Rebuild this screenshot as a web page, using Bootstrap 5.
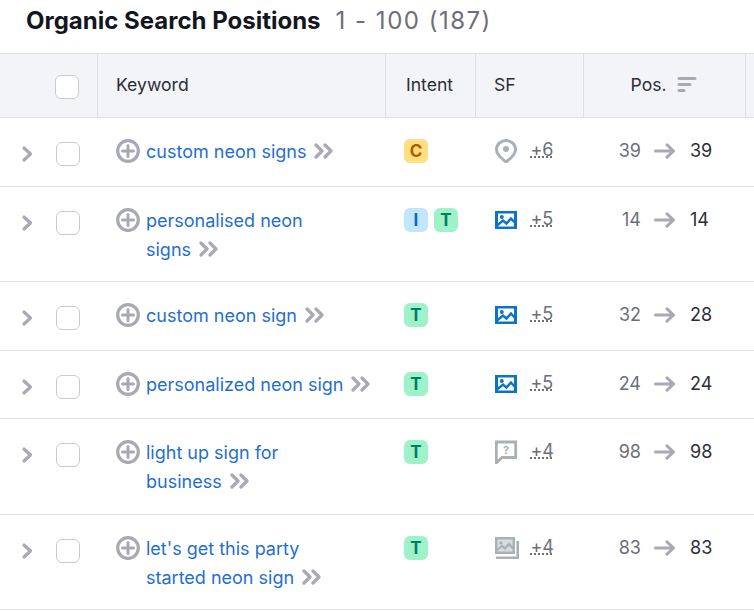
<!doctype html>
<html lang="en"><head><meta charset="utf-8"><title>Organic Search Positions</title>
<link href="https://cdn.jsdelivr.net/npm/bootstrap@5.3.0/dist/css/bootstrap.min.css" rel="stylesheet">
<style>
html,body{height:611px;overflow:hidden;background:#fff}
body{font-family:Inter,"Liberation Sans",sans-serif;color:#191b23;width:754px}
.ttl{height:53px;padding:6px 0 0 26px;font-size:24px;line-height:30px;white-space:nowrap}
.ttl b{font-weight:700;color:#14161d}
.ttl span{color:#6c6e79;font-weight:400;margin-left:15px;letter-spacing:1.5px}
.gridt{width:754px;table-layout:fixed;margin:0;border-collapse:separate;border-spacing:0;font-size:18px}
.gridt th{background:#f3f4f8;height:65px;font-weight:400;font-size:17.6px;color:#2b2e38;vertical-align:middle;padding:0 0 0 18px;border-top:1px solid #dfe0e7;border-bottom:1px solid #dfe0e7;border-right:1px solid #dfe0e7;box-shadow:none}
.gridt th.nb{padding:0}
.gridt th.ints{padding-left:20px}
.gridt th.psh{padding:0}
.gridt th:last-child{border-right:0}
.gridt td{vertical-align:top;padding:0;border-bottom:1px solid #dfe0e7;box-shadow:none;background:#fff}
.hchk{display:block;width:24px;height:24px;margin:2px 0 0 55px}
.ctl{display:flex;padding-top:24px;padding-left:21px;height:100%}
.chev{width:14px;height:24px;margin-right:21px;display:block}
.cb{width:24px;height:24px;border:1.5px solid #c9cad2;border-radius:6px;background:#fff;flex:none;display:block}
.kw{display:flex;padding:19px 8px 0 18px;line-height:29px}
.kw svg.pl{flex:none;width:24px;height:24px;margin:2px 6px 0 0}
.kw a{color:#1f6fd1;text-decoration:none}
.kw svg.go{width:20px;height:16px;margin-left:8px;vertical-align:-1px}
.intent{display:flex;gap:6px;padding:21px 0 0 18px}
.tg{width:24px;height:24px;border-radius:6px;display:flex;align-items:center;justify-content:center;font-size:17px;font-weight:700;line-height:1}
.tg-c{background:#ffdf80;color:#b25a00}
.tg-i{background:#c4e5fe;color:#006dca}
.tg-t{background:#9ef2c9;color:#007c65}
.sf{display:flex;align-items:flex-start;padding:21px 0 0 19px}
.sf svg{width:24px;height:24px;flex:none;display:block}
.sf u{margin-left:11.5px;font-size:18px;line-height:22px;color:#6c6e79;text-decoration:underline dotted #6c6e79 1.5px;text-underline-offset:0;letter-spacing:-.2px}
.pos{display:flex;align-items:center;padding:21px 0 0 0;height:24px;line-height:24px;box-sizing:content-box}
.pa{width:57px;text-align:right;color:#6c6e79}
.pos svg{width:22px;height:16px;margin:0 14px 0 13px;flex:none}
.pb{color:#2b2e38}
.srt{vertical-align:-3px;margin-left:5px}
</style></head><body>
<svg width="0" height="0" class="d-block" aria-hidden="true"><defs>
<symbol id="plus" viewBox="0 0 24 24"><circle cx="12" cy="12" r="10.300" fill="none" stroke="#a8a9b4" stroke-width="3.200"/><path d="M12 6.500v11M6.500 12h11" stroke="#a8a9b4" stroke-width="3" stroke-linecap="round"/></symbol>
<symbol id="dbl" viewBox="0 0 20 16"><path d="M2 2 8 8l-6 6M11 2l6 6-6 6" fill="none" stroke="#a8a9b4" stroke-width="3.200" stroke-linecap="round" stroke-linejoin="round"/></symbol>
<symbol id="chv" viewBox="0 0 14 24"><path d="M3 6l6.500 6L3 18" fill="none" stroke="#a8a9b4" stroke-width="3.200" stroke-linecap="round" stroke-linejoin="round"/></symbol>
<symbol id="arr" viewBox="0 0 22 16"><path d="M1.500 8h18M13 1.800 19.500 8 13 14.200" fill="none" stroke="#a8a9b4" stroke-width="3" stroke-linecap="round" stroke-linejoin="round"/></symbol>
<symbol id="img" viewBox="0 0 24 24"><path fill="#0a75c2" d="M0 3h22v18H0z"/><path fill="#fff" d="M3 5.500h16v13H3z"/><circle cx="6.800" cy="9" r="2" fill="#0a75c2"/><path d="M2 17.500l6-5 3.500 3 4.500-5 5 5.500" fill="none" stroke="#0a75c2" stroke-width="2.400"/></symbol>
</defs></svg>
<div class="ttl"><b>Organic Search Positions</b><span>1 - 100 (187)</span></div>
<table class="table gridt">
<colgroup><col style="width:98px"><col style="width:288px"><col style="width:90px"><col style="width:108px"><col style="width:162px"><col></colgroup>
<thead><tr><th class="nb"><span class="cb hchk"></span></th><th>Keyword</th><th class="ints">Intent</th><th>SF</th><th class="text-center psh">Pos. <svg width="22" height="18" viewBox="0 0 22 18" class="srt"><path d="M2 2.500h16M2 8.500h11M2 14.500h5" stroke="#a8a9b4" stroke-width="3" stroke-linecap="round"/></svg></th><th></th></tr></thead>
<tbody>
<tr style="height:69px"><td><div class="ctl"><svg class="chev"><use href="#chv"/></svg><span class="cb"></span></div></td><td><div class="kw"><svg class="pl"><use href="#plus"/></svg><div><a href="#">custom neon signs</a><svg class="go"><use href="#dbl"/></svg></div></div></td><td><div class="intent"><span class="tg tg-c">C</span></div></td><td><div class="sf"><svg viewBox="0 0 24 24"><path d="M11 1.500C5.800 1.500 1.500 5.500 1.500 10.500 1.500 15.500 7 20 11 23c4-3 9.500-7.500 9.500-12.500C20.500 5.500 16.200 1.500 11 1.500z" fill="none" stroke="#a9b1b5" stroke-width="3"/><circle cx="11" cy="10" r="3" fill="#a9b1b5"/></svg><u>+6</u></div></td><td><div class="pos"><span class="pa">39</span><svg><use href="#arr"/></svg><span class="pb">39</span></div></td><td></td></tr>
<tr style="height:95px"><td><div class="ctl"><svg class="chev"><use href="#chv"/></svg><span class="cb"></span></div></td><td><div class="kw"><svg class="pl"><use href="#plus"/></svg><div><a href="#">personalised neon<br>signs</a><svg class="go"><use href="#dbl"/></svg></div></div></td><td><div class="intent"><span class="tg tg-i">I</span><span class="tg tg-t">T</span></div></td><td><div class="sf"><svg><use href="#img"/></svg><u>+5</u></div></td><td><div class="pos"><span class="pa">14</span><svg><use href="#arr"/></svg><span class="pb">14</span></div></td><td></td></tr>
<tr style="height:69px"><td><div class="ctl"><svg class="chev"><use href="#chv"/></svg><span class="cb"></span></div></td><td><div class="kw"><svg class="pl"><use href="#plus"/></svg><div><a href="#">custom neon sign</a><svg class="go"><use href="#dbl"/></svg></div></div></td><td><div class="intent"><span class="tg tg-t">T</span></div></td><td><div class="sf"><svg><use href="#img"/></svg><u>+5</u></div></td><td><div class="pos"><span class="pa">32</span><svg><use href="#arr"/></svg><span class="pb">28</span></div></td><td></td></tr>
<tr style="height:68px"><td><div class="ctl"><svg class="chev"><use href="#chv"/></svg><span class="cb"></span></div></td><td><div class="kw"><svg class="pl"><use href="#plus"/></svg><div><a href="#">personalized neon sign</a><svg class="go"><use href="#dbl"/></svg></div></div></td><td><div class="intent"><span class="tg tg-t">T</span></div></td><td><div class="sf"><svg><use href="#img"/></svg><u>+5</u></div></td><td><div class="pos"><span class="pa">24</span><svg><use href="#arr"/></svg><span class="pb">24</span></div></td><td></td></tr>
<tr style="height:96px"><td><div class="ctl"><svg class="chev"><use href="#chv"/></svg><span class="cb"></span></div></td><td><div class="kw"><svg class="pl"><use href="#plus"/></svg><div><a href="#">light up sign for<br>business</a><svg class="go"><use href="#dbl"/></svg></div></div></td><td><div class="intent"><span class="tg tg-t">T</span></div></td><td><div class="sf"><svg viewBox="0 0 24 24"><path d="M1.300 2h19.400v15.500H7l-5.700 5.500z" fill="none" stroke="#a9b1b5" stroke-width="2.800"/><text x="11" y="13.500" font-size="11" font-weight="700" text-anchor="middle" fill="#a9b1b5" font-family="Inter,sans-serif">?</text></svg><u>+4</u></div></td><td><div class="pos"><span class="pa">98</span><svg><use href="#arr"/></svg><span class="pb">98</span></div></td><td></td></tr>
<tr style="height:95px"><td><div class="ctl"><svg class="chev"><use href="#chv"/></svg><span class="cb"></span></div></td><td><div class="kw"><svg class="pl"><use href="#plus"/></svg><div><a href="#">let's get this party<br>started neon sign</a><svg class="go"><use href="#dbl"/></svg></div></div></td><td><div class="intent"><span class="tg tg-t">T</span></div></td><td><div class="sf"><svg viewBox="0 0 24 24" class="gimg"><path fill="#a9b1b5" d="M0 1h20v17H0z"/><path fill="#d8dcdf" d="M2.500 3.500h15v12h-15z"/><circle cx="6" cy="6.800" r="1.600" fill="#a9b1b5"/><path d="M2 14l5-4 3 2.500 4-4.500 4 4.500" fill="none" stroke="#a9b1b5" stroke-width="2.200"/><path d="M1 21.800h21.700V5" fill="none" stroke="#a9b1b5" stroke-width="2.600"/></svg><u>+4</u></div></td><td><div class="pos"><span class="pa">83</span><svg><use href="#arr"/></svg><span class="pb">83</span></div></td><td></td></tr>
</tbody></table>
<script src="https://cdn.jsdelivr.net/npm/bootstrap@5.3.0/dist/js/bootstrap.bundle.min.js"></script>
</body></html>
